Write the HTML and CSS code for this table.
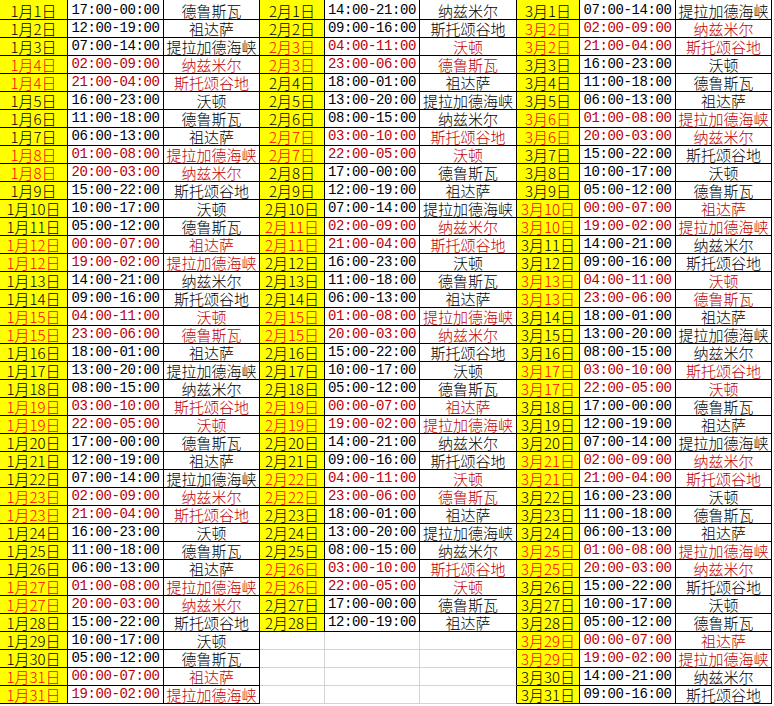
FILE: index.html
```html
<!DOCTYPE html>
<html lang="zh-CN">
<head>
<meta charset="utf-8">
<title>排班表</title>
<link rel="stylesheet" href="styles.css">
</head>
<body>
<div class="sheet">
  <div class="month m1">
    <div class="row"><div class="d">1月1日</div><div class="t">17:00-00:00</div><div class="l">德鲁斯瓦</div></div>
    <div class="row"><div class="d">1月2日</div><div class="t">12:00-19:00</div><div class="l">祖达萨</div></div>
    <div class="row"><div class="d">1月3日</div><div class="t">07:00-14:00</div><div class="l">提拉加德海峡</div></div>
    <div class="row red"><div class="d">1月4日</div><div class="t">02:00-09:00</div><div class="l">纳兹米尔</div></div>
    <div class="row red"><div class="d">1月4日</div><div class="t">21:00-04:00</div><div class="l">斯托颂谷地</div></div>
    <div class="row"><div class="d">1月5日</div><div class="t">16:00-23:00</div><div class="l">沃顿</div></div>
    <div class="row"><div class="d">1月6日</div><div class="t">11:00-18:00</div><div class="l">德鲁斯瓦</div></div>
    <div class="row"><div class="d">1月7日</div><div class="t">06:00-13:00</div><div class="l">祖达萨</div></div>
    <div class="row red"><div class="d">1月8日</div><div class="t">01:00-08:00</div><div class="l">提拉加德海峡</div></div>
    <div class="row red"><div class="d">1月8日</div><div class="t">20:00-03:00</div><div class="l">纳兹米尔</div></div>
    <div class="row"><div class="d">1月9日</div><div class="t">15:00-22:00</div><div class="l">斯托颂谷地</div></div>
    <div class="row"><div class="d">1月10日</div><div class="t">10:00-17:00</div><div class="l">沃顿</div></div>
    <div class="row"><div class="d">1月11日</div><div class="t">05:00-12:00</div><div class="l">德鲁斯瓦</div></div>
    <div class="row red"><div class="d">1月12日</div><div class="t">00:00-07:00</div><div class="l">祖达萨</div></div>
    <div class="row red"><div class="d">1月12日</div><div class="t">19:00-02:00</div><div class="l">提拉加德海峡</div></div>
    <div class="row"><div class="d">1月13日</div><div class="t">14:00-21:00</div><div class="l">纳兹米尔</div></div>
    <div class="row"><div class="d">1月14日</div><div class="t">09:00-16:00</div><div class="l">斯托颂谷地</div></div>
    <div class="row red"><div class="d">1月15日</div><div class="t">04:00-11:00</div><div class="l">沃顿</div></div>
    <div class="row red"><div class="d">1月15日</div><div class="t">23:00-06:00</div><div class="l">德鲁斯瓦</div></div>
    <div class="row"><div class="d">1月16日</div><div class="t">18:00-01:00</div><div class="l">祖达萨</div></div>
    <div class="row"><div class="d">1月17日</div><div class="t">13:00-20:00</div><div class="l">提拉加德海峡</div></div>
    <div class="row"><div class="d">1月18日</div><div class="t">08:00-15:00</div><div class="l">纳兹米尔</div></div>
    <div class="row red"><div class="d">1月19日</div><div class="t">03:00-10:00</div><div class="l">斯托颂谷地</div></div>
    <div class="row red"><div class="d">1月19日</div><div class="t">22:00-05:00</div><div class="l">沃顿</div></div>
    <div class="row"><div class="d">1月20日</div><div class="t">17:00-00:00</div><div class="l">德鲁斯瓦</div></div>
    <div class="row"><div class="d">1月21日</div><div class="t">12:00-19:00</div><div class="l">祖达萨</div></div>
    <div class="row"><div class="d">1月22日</div><div class="t">07:00-14:00</div><div class="l">提拉加德海峡</div></div>
    <div class="row red"><div class="d">1月23日</div><div class="t">02:00-09:00</div><div class="l">纳兹米尔</div></div>
    <div class="row red"><div class="d">1月23日</div><div class="t">21:00-04:00</div><div class="l">斯托颂谷地</div></div>
    <div class="row"><div class="d">1月24日</div><div class="t">16:00-23:00</div><div class="l">沃顿</div></div>
    <div class="row"><div class="d">1月25日</div><div class="t">11:00-18:00</div><div class="l">德鲁斯瓦</div></div>
    <div class="row"><div class="d">1月26日</div><div class="t">06:00-13:00</div><div class="l">祖达萨</div></div>
    <div class="row red"><div class="d">1月27日</div><div class="t">01:00-08:00</div><div class="l">提拉加德海峡</div></div>
    <div class="row red"><div class="d">1月27日</div><div class="t">20:00-03:00</div><div class="l">纳兹米尔</div></div>
    <div class="row"><div class="d">1月28日</div><div class="t">15:00-22:00</div><div class="l">斯托颂谷地</div></div>
    <div class="row"><div class="d">1月29日</div><div class="t">10:00-17:00</div><div class="l">沃顿</div></div>
    <div class="row"><div class="d">1月30日</div><div class="t">05:00-12:00</div><div class="l">德鲁斯瓦</div></div>
    <div class="row red"><div class="d">1月31日</div><div class="t">00:00-07:00</div><div class="l">祖达萨</div></div>
    <div class="row red"><div class="d">1月31日</div><div class="t">19:00-02:00</div><div class="l">提拉加德海峡</div></div>
  </div>
  <div class="month m2">
    <div class="row"><div class="d">2月1日</div><div class="t">14:00-21:00</div><div class="l">纳兹米尔</div></div>
    <div class="row"><div class="d">2月2日</div><div class="t">09:00-16:00</div><div class="l">斯托颂谷地</div></div>
    <div class="row red"><div class="d">2月3日</div><div class="t">04:00-11:00</div><div class="l">沃顿</div></div>
    <div class="row red"><div class="d">2月3日</div><div class="t">23:00-06:00</div><div class="l">德鲁斯瓦</div></div>
    <div class="row"><div class="d">2月4日</div><div class="t">18:00-01:00</div><div class="l">祖达萨</div></div>
    <div class="row"><div class="d">2月5日</div><div class="t">13:00-20:00</div><div class="l">提拉加德海峡</div></div>
    <div class="row"><div class="d">2月6日</div><div class="t">08:00-15:00</div><div class="l">纳兹米尔</div></div>
    <div class="row red"><div class="d">2月7日</div><div class="t">03:00-10:00</div><div class="l">斯托颂谷地</div></div>
    <div class="row red"><div class="d">2月7日</div><div class="t">22:00-05:00</div><div class="l">沃顿</div></div>
    <div class="row"><div class="d">2月8日</div><div class="t">17:00-00:00</div><div class="l">德鲁斯瓦</div></div>
    <div class="row"><div class="d">2月9日</div><div class="t">12:00-19:00</div><div class="l">祖达萨</div></div>
    <div class="row"><div class="d">2月10日</div><div class="t">07:00-14:00</div><div class="l">提拉加德海峡</div></div>
    <div class="row red"><div class="d">2月11日</div><div class="t">02:00-09:00</div><div class="l">纳兹米尔</div></div>
    <div class="row red"><div class="d">2月11日</div><div class="t">21:00-04:00</div><div class="l">斯托颂谷地</div></div>
    <div class="row"><div class="d">2月12日</div><div class="t">16:00-23:00</div><div class="l">沃顿</div></div>
    <div class="row"><div class="d">2月13日</div><div class="t">11:00-18:00</div><div class="l">德鲁斯瓦</div></div>
    <div class="row"><div class="d">2月14日</div><div class="t">06:00-13:00</div><div class="l">祖达萨</div></div>
    <div class="row red"><div class="d">2月15日</div><div class="t">01:00-08:00</div><div class="l">提拉加德海峡</div></div>
    <div class="row red"><div class="d">2月15日</div><div class="t">20:00-03:00</div><div class="l">纳兹米尔</div></div>
    <div class="row"><div class="d">2月16日</div><div class="t">15:00-22:00</div><div class="l">斯托颂谷地</div></div>
    <div class="row"><div class="d">2月17日</div><div class="t">10:00-17:00</div><div class="l">沃顿</div></div>
    <div class="row"><div class="d">2月18日</div><div class="t">05:00-12:00</div><div class="l">德鲁斯瓦</div></div>
    <div class="row red"><div class="d">2月19日</div><div class="t">00:00-07:00</div><div class="l">祖达萨</div></div>
    <div class="row red"><div class="d">2月19日</div><div class="t">19:00-02:00</div><div class="l">提拉加德海峡</div></div>
    <div class="row"><div class="d">2月20日</div><div class="t">14:00-21:00</div><div class="l">纳兹米尔</div></div>
    <div class="row"><div class="d">2月21日</div><div class="t">09:00-16:00</div><div class="l">斯托颂谷地</div></div>
    <div class="row red"><div class="d">2月22日</div><div class="t">04:00-11:00</div><div class="l">沃顿</div></div>
    <div class="row red"><div class="d">2月22日</div><div class="t">23:00-06:00</div><div class="l">德鲁斯瓦</div></div>
    <div class="row"><div class="d">2月23日</div><div class="t">18:00-01:00</div><div class="l">祖达萨</div></div>
    <div class="row"><div class="d">2月24日</div><div class="t">13:00-20:00</div><div class="l">提拉加德海峡</div></div>
    <div class="row"><div class="d">2月25日</div><div class="t">08:00-15:00</div><div class="l">纳兹米尔</div></div>
    <div class="row red"><div class="d">2月26日</div><div class="t">03:00-10:00</div><div class="l">斯托颂谷地</div></div>
    <div class="row red"><div class="d">2月26日</div><div class="t">22:00-05:00</div><div class="l">沃顿</div></div>
    <div class="row"><div class="d">2月27日</div><div class="t">17:00-00:00</div><div class="l">德鲁斯瓦</div></div>
    <div class="row"><div class="d">2月28日</div><div class="t">12:00-19:00</div><div class="l">祖达萨</div></div>
    <div class="row empty"><div></div><div></div><div></div></div>
    <div class="row empty"><div></div><div></div><div></div></div>
    <div class="row empty"><div></div><div></div><div></div></div>
    <div class="row empty"><div></div><div></div><div></div></div>
  </div>
  <div class="month m3">
    <div class="row"><div class="d">3月1日</div><div class="t">07:00-14:00</div><div class="l">提拉加德海峡</div></div>
    <div class="row red"><div class="d">3月2日</div><div class="t">02:00-09:00</div><div class="l">纳兹米尔</div></div>
    <div class="row red"><div class="d">3月2日</div><div class="t">21:00-04:00</div><div class="l">斯托颂谷地</div></div>
    <div class="row"><div class="d">3月3日</div><div class="t">16:00-23:00</div><div class="l">沃顿</div></div>
    <div class="row"><div class="d">3月4日</div><div class="t">11:00-18:00</div><div class="l">德鲁斯瓦</div></div>
    <div class="row"><div class="d">3月5日</div><div class="t">06:00-13:00</div><div class="l">祖达萨</div></div>
    <div class="row red"><div class="d">3月6日</div><div class="t">01:00-08:00</div><div class="l">提拉加德海峡</div></div>
    <div class="row red"><div class="d">3月6日</div><div class="t">20:00-03:00</div><div class="l">纳兹米尔</div></div>
    <div class="row"><div class="d">3月7日</div><div class="t">15:00-22:00</div><div class="l">斯托颂谷地</div></div>
    <div class="row"><div class="d">3月8日</div><div class="t">10:00-17:00</div><div class="l">沃顿</div></div>
    <div class="row"><div class="d">3月9日</div><div class="t">05:00-12:00</div><div class="l">德鲁斯瓦</div></div>
    <div class="row red"><div class="d">3月10日</div><div class="t">00:00-07:00</div><div class="l">祖达萨</div></div>
    <div class="row red"><div class="d">3月10日</div><div class="t">19:00-02:00</div><div class="l">提拉加德海峡</div></div>
    <div class="row"><div class="d">3月11日</div><div class="t">14:00-21:00</div><div class="l">纳兹米尔</div></div>
    <div class="row"><div class="d">3月12日</div><div class="t">09:00-16:00</div><div class="l">斯托颂谷地</div></div>
    <div class="row red"><div class="d">3月13日</div><div class="t">04:00-11:00</div><div class="l">沃顿</div></div>
    <div class="row red"><div class="d">3月13日</div><div class="t">23:00-06:00</div><div class="l">德鲁斯瓦</div></div>
    <div class="row"><div class="d">3月14日</div><div class="t">18:00-01:00</div><div class="l">祖达萨</div></div>
    <div class="row"><div class="d">3月15日</div><div class="t">13:00-20:00</div><div class="l">提拉加德海峡</div></div>
    <div class="row"><div class="d">3月16日</div><div class="t">08:00-15:00</div><div class="l">纳兹米尔</div></div>
    <div class="row red"><div class="d">3月17日</div><div class="t">03:00-10:00</div><div class="l">斯托颂谷地</div></div>
    <div class="row red"><div class="d">3月17日</div><div class="t">22:00-05:00</div><div class="l">沃顿</div></div>
    <div class="row"><div class="d">3月18日</div><div class="t">17:00-00:00</div><div class="l">德鲁斯瓦</div></div>
    <div class="row"><div class="d">3月19日</div><div class="t">12:00-19:00</div><div class="l">祖达萨</div></div>
    <div class="row"><div class="d">3月20日</div><div class="t">07:00-14:00</div><div class="l">提拉加德海峡</div></div>
    <div class="row red"><div class="d">3月21日</div><div class="t">02:00-09:00</div><div class="l">纳兹米尔</div></div>
    <div class="row red"><div class="d">3月21日</div><div class="t">21:00-04:00</div><div class="l">斯托颂谷地</div></div>
    <div class="row"><div class="d">3月22日</div><div class="t">16:00-23:00</div><div class="l">沃顿</div></div>
    <div class="row"><div class="d">3月23日</div><div class="t">11:00-18:00</div><div class="l">德鲁斯瓦</div></div>
    <div class="row"><div class="d">3月24日</div><div class="t">06:00-13:00</div><div class="l">祖达萨</div></div>
    <div class="row red"><div class="d">3月25日</div><div class="t">01:00-08:00</div><div class="l">提拉加德海峡</div></div>
    <div class="row red"><div class="d">3月25日</div><div class="t">20:00-03:00</div><div class="l">纳兹米尔</div></div>
    <div class="row"><div class="d">3月26日</div><div class="t">15:00-22:00</div><div class="l">斯托颂谷地</div></div>
    <div class="row"><div class="d">3月27日</div><div class="t">10:00-17:00</div><div class="l">沃顿</div></div>
    <div class="row"><div class="d">3月28日</div><div class="t">05:00-12:00</div><div class="l">德鲁斯瓦</div></div>
    <div class="row red"><div class="d">3月29日</div><div class="t">00:00-07:00</div><div class="l">祖达萨</div></div>
    <div class="row red"><div class="d">3月29日</div><div class="t">19:00-02:00</div><div class="l">提拉加德海峡</div></div>
    <div class="row"><div class="d">3月30日</div><div class="t">14:00-21:00</div><div class="l">纳兹米尔</div></div>
    <div class="row"><div class="d">3月31日</div><div class="t">09:00-16:00</div><div class="l">斯托颂谷地</div></div>
  </div>
</div>
</body>
</html>
```
FILE: styles.css
```css
html, body {
  margin: 0;
  padding: 0;
  background: #ffffff;
}

body {
  width: 774px;
  height: 706px;
  overflow: hidden;
  font-family: "Noto Sans CJK SC", "Noto Sans", sans-serif;
  color: #000000;
}

.sheet {
  display: flex;
  align-items: flex-start;
}

.month {
  display: flex;
  flex-direction: column;
}

.row {
  display: grid;
  height: 18px;
}

.m1 .row { grid-template-columns: 68px 96px 96px; }
.m2 .row { grid-template-columns: 65px 95px 97px; }
.m3 .row { grid-template-columns: 63px 96px 96px; }

.row:first-child {
  height: 20px;
}

.row > div {
  box-sizing: border-box;
  border-right: 1px solid #000000;
  border-bottom: 1px solid #000000;
  text-align: center;
  white-space: nowrap;
  font-size: 15px;
  font-weight: 300;
  line-height: 17px;
}

.row:first-child > div {
  padding-top: 2px;
}

.d {
  background: #ffff00;
}

.row > .t {
  font-family: "Liberation Mono", "DejaVu Sans Mono", monospace;
  font-size: 14px;
  font-weight: 400;
  letter-spacing: -0.4px;
}

.red .d {
  color: #ff0000;
}

.red .t,
.red .l {
  color: #c00000;
}

.empty > div {
  border-right-color: #d4d4d4;
  border-bottom-color: #d4d4d4;
}

.empty > div:last-child {
  border-right-color: #000000;
}
```
